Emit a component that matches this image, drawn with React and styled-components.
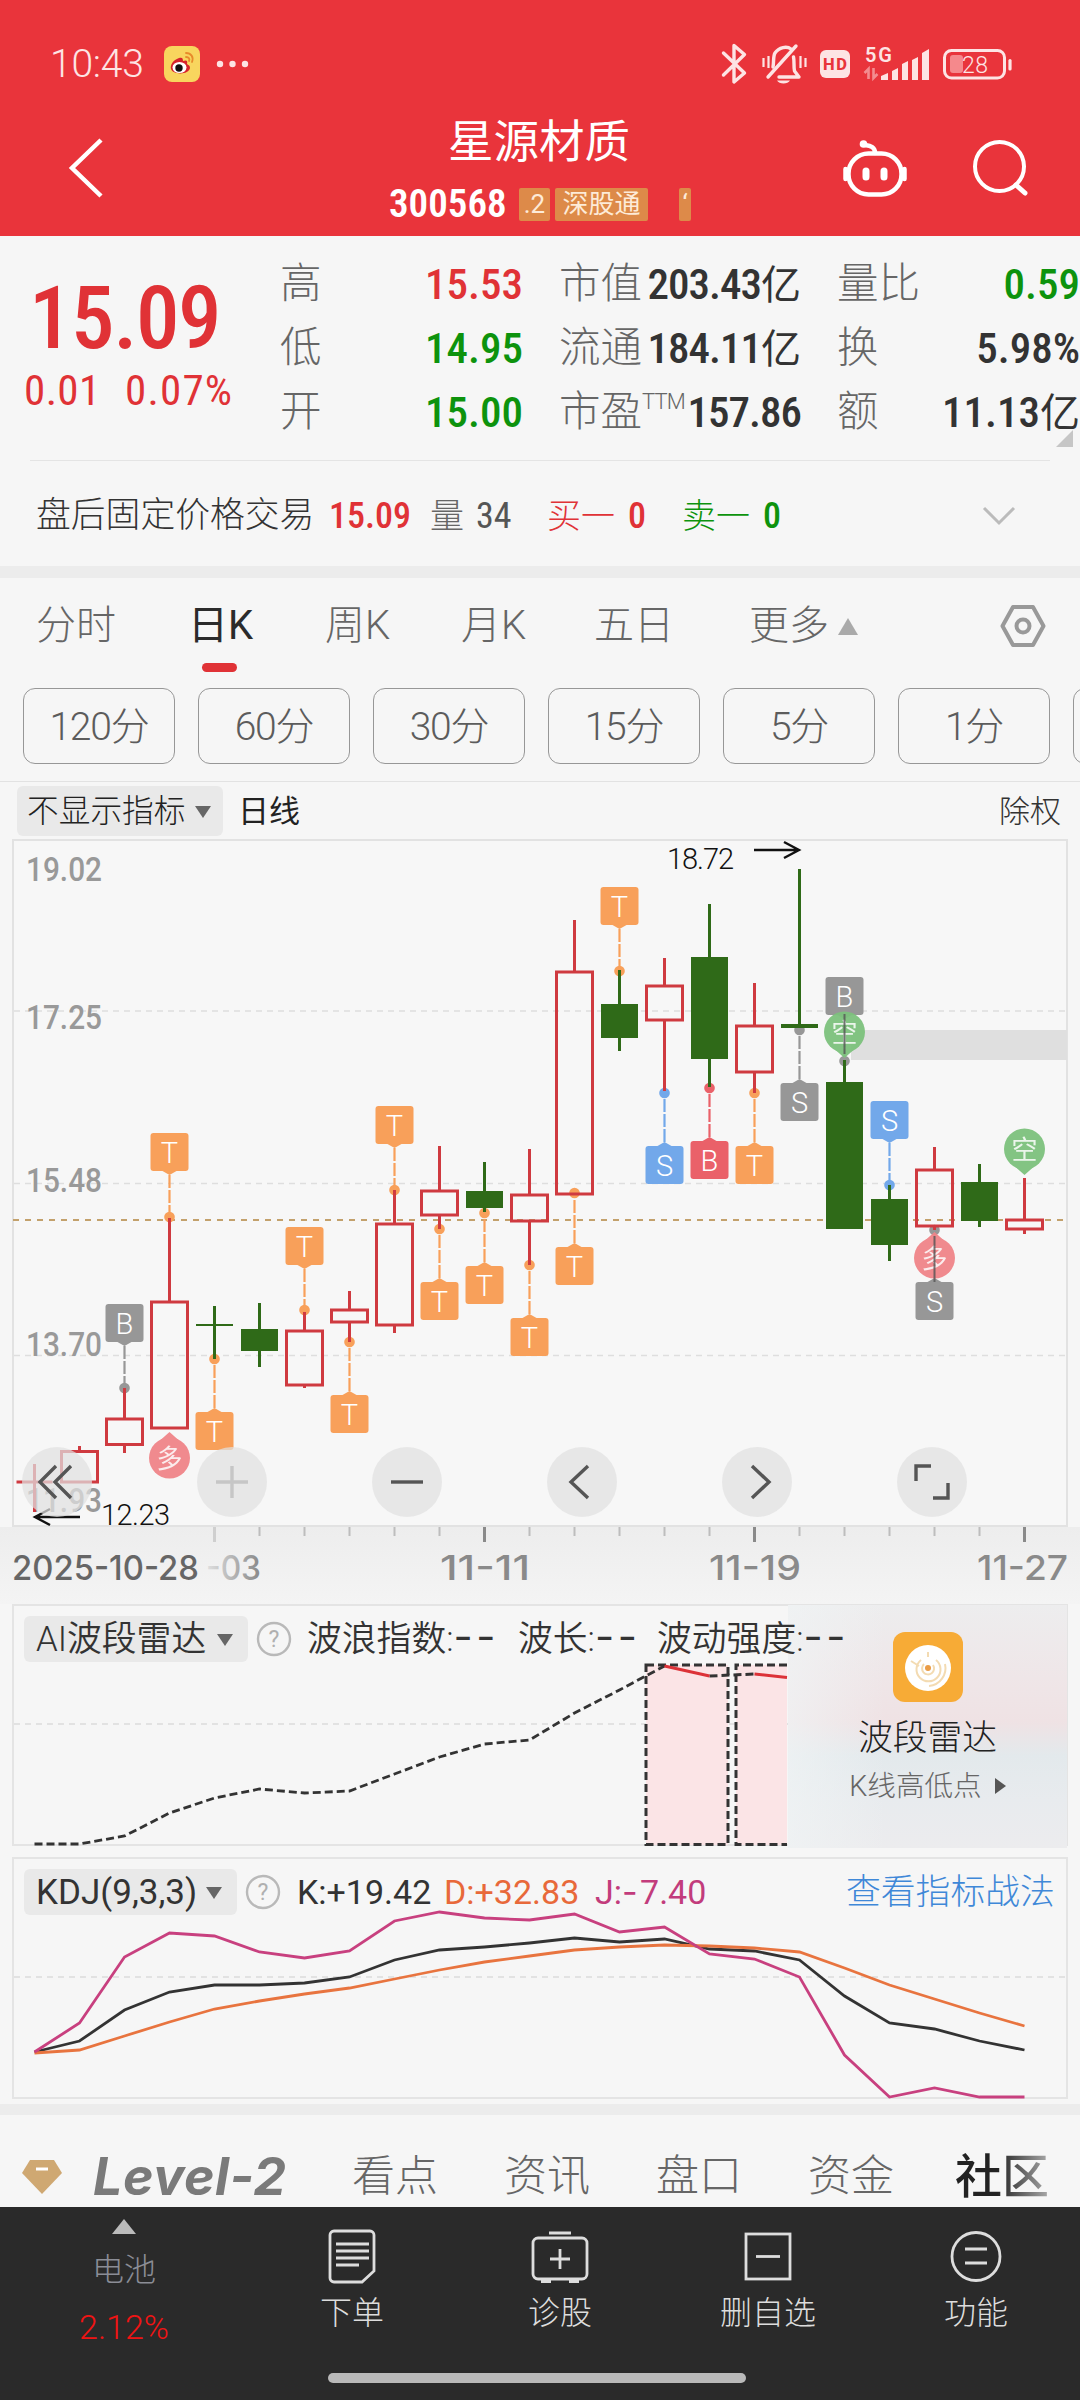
import React from 'react';
import styled, { createGlobalStyle, css } from 'styled-components';

const RED = '#e03236';
const GREEN = '#0d930d';
const BAR_RED = '#cf3a40';
const BAR_GREEN = '#2f6a18';
const ORANGE = '#f8a05a';
const GREY = '#979797';

const GlobalStyle = createGlobalStyle`
  * {
    box-sizing: border-box;
  }

  body {
    margin: 0;
    background: #f6f6f6;
    font-family: 'Roboto', 'Noto Sans CJK SC', sans-serif;
    color: #333;
  }

  svg {
    display: block;
    flex: none;
  }
`;

const Screen = styled.div`
  width: 1080px;
  height: 2400px;
  overflow: hidden;
  display: flex;
  flex-direction: column;
`;

const Text = styled.span`
  flex: none;
  white-space: nowrap;
  line-height: 1;
  font-size: ${({ $size }) => $size || 32}px;
  font-weight: ${({ $weight }) => $weight || 300};
  color: ${({ $color }) => $color || 'inherit'};
  letter-spacing: ${({ $track }) => $track || 0}px;
  margin-left: ${({ $left }) => $left || 0}px;
  ${({ $top }) =>
    $top &&
    css`
      margin-top: ${$top}px;
    `}
  ${({ $width }) =>
    $width &&
    css`
      width: ${$width}px;
    `}
`;

const Digits = styled(Text)`
  font-stretch: 87%;
`;

const Dash = styled.span`
  font-family: 'Inter', sans-serif;
  font-weight: 400;
  font-size: ${({ $wide }) => ($wide ? '1.2em' : '1em')};
  line-height: 0;
  letter-spacing: ${({ $wide }) => ($wide ? 3.6 : 2.4)}px;
`;

const Row = styled.div`
  display: flex;
  align-items: center;
  flex: none;
  margin-top: ${({ $top }) => $top || 0}px;
`;

/* ---------- header ---------- */

const Header = styled.header`
  flex: none;
  height: 236px;
  background: #e9343b;
  color: #fff;
`;

const StatusBar = styled(Row)`
  height: 102px;
  padding: 26px 68px 0 50px;
  color: #fde4e4;
  justify-content: space-between;
`;

const NavBar = styled.div`
  height: 134px;
  display: grid;
  grid-template-columns: 389px 1fr 389px;
`;

const NavSide = styled(Row)`
  padding: ${({ $end }) => ($end ? '0 50px 2px 0' : '0 0 2px 67px')};
  justify-content: ${({ $end }) => ($end ? 'flex-end' : 'flex-start')};
  gap: 64px;
`;

const NavTitle = styled.div`
  display: flex;
  flex-direction: column;
  padding-top: 16px;
`;

const StockName = styled.h1`
  margin: 0;
  height: 50px;
  line-height: 50px;
  font-size: 45.5px;
  font-weight: 400;
  padding-left: 59px;
`;

const CodeRow = styled(Row)`
  height: 32px;
  margin-top: 20px;
`;

const Tag = styled.span`
  height: 33px;
  width: ${({ $width }) => $width}px;
  margin-left: ${({ $left }) => $left}px;
  border-radius: 2px;
  background: #dd8a49;
  color: #fdebd8;
  font-size: 26px;
  font-weight: 400;
  line-height: 33px;
  text-align: center;
  white-space: nowrap;
  overflow: hidden;
`;

/* ---------- quote ---------- */

const Quote = styled.section`
  flex: none;
  height: 224px;
  display: grid;
  grid-template-columns: 280px 243px 36px 242px 36px 243px;
  position: relative;
`;

const PriceBlock = styled.div`
  color: ${RED};
  padding: 38px 0 0 24px;
`;

const Price = styled.div`
  font-size: 87px;
  line-height: 88px;
  font-weight: 500;
  font-stretch: 87%;
  letter-spacing: -1.4px;
  padding-left: 5px;
`;

const Column = styled.div`
  padding-top: 16px;
`;

const Metric = styled(Row)`
  height: 64px;
  justify-content: space-between;
`;

const MetricLabel = styled.span`
  font-size: 41.5px;
  line-height: 1;
  font-weight: 300;
  color: #666;
  display: flex;
  white-space: nowrap;
`;

const Sup = styled.sup`
  font-size: 22px;
  line-height: 22px;
  font-weight: 300;
  letter-spacing: -0.8px;
`;

const MetricValue = styled.span`
  font-size: 43px;
  line-height: 1;
  font-weight: 500;
  font-stretch: 87%;
  letter-spacing: ${({ $tight }) => ($tight ? -1 : 0)}px;
  white-space: nowrap;
  color: ${({ $color }) => $color || '#333'};
`;

const Unit = styled.span`
  font-size: 40px;
  line-height: 0;
  font-weight: 400;
  letter-spacing: 0;
`;

const Corner = styled.i`
  position: absolute;
  right: 7px;
  bottom: 13px;
  border-left: 17px solid transparent;
  border-bottom: 17px solid #c6c6c6;
`;

const AfterHours = styled(Row)`
  height: 106px;
  margin: 0 30px;
  padding: 4px 34px 0 6px;
  border-top: 1px solid #e4e4e4;
`;

const Gap = styled.div`
  flex: none;
  height: ${({ $height }) => $height}px;
  background: #ececec;
`;

/* ---------- period tabs ---------- */

const Tabs = styled(Row)`
  height: 110px;
  padding: 0 0 14px 36px;
  color: #666;
`;

const Tab = styled.span`
  position: relative;
  flex: none;
  font-size: 40px;
  line-height: 1;
  font-weight: ${({ $active }) => ($active ? 400 : 300)};
  color: ${({ $active }) => ($active ? '#2b2b2b' : '#666')};
  width: ${({ $width }) => $width}px;

  ${({ $active }) =>
    $active &&
    css`
      &::after {
        content: '';
        position: absolute;
        left: 14px;
        bottom: -26px;
        width: 35px;
        height: 9px;
        border-radius: 5px;
        background: ${RED};
      }
    `}
`;

const Pills = styled(Row)`
  height: 94px;
  padding-left: 23px;
  gap: 23px;
  align-items: flex-start;
  border-bottom: 1px solid #e2e2e2;
  overflow: hidden;
`;

const Pill = styled.span`
  flex: none;
  width: 152px;
  height: 76px;
  border: 1px solid #979797;
  border-radius: 12px;
  text-align: center;
  font-size: 39px;
  line-height: 76px;
  font-weight: 300;
  letter-spacing: -1.2px;
  color: #5c5c5c;
`;

const Toolbar = styled(Row)`
  height: 57px;
  padding: 1px 20px 0 17px;
`;

const Picker = styled.span`
  flex: none;
  display: flex;
  align-items: center;
  justify-content: space-between;
  width: ${({ $width }) => $width}px;
  height: ${({ $height }) => $height || 46}px;
  padding: 1px ${({ $end }) => $end || 15}px 0 ${({ $pad }) => $pad || 12}px;
  background: #e9e9e9;
  border-radius: 6px;
`;

const Caret = styled.i`
  flex: none;
  border: solid transparent;
  border-width: 0 ${({ $half }) => $half || 8}px;
  ${({ $up, $color, $tall }) =>
    $up
      ? css`
          border-bottom: ${$tall}px solid ${$color};
        `
      : css`
          border-top: 12px solid #666;
        `}
`;

/* ---------- charts ---------- */

const ChartArea = styled.div`
  position: relative;
  flex: none;
  height: 765px;
`;

const ChartButtons = styled.div`
  position: absolute;
  left: 22px;
  top: 608px;
  display: flex;
  gap: 105px;
`;

const RoundButton = styled.button`
  width: 70px;
  height: 70px;
  padding: 0;
  border: 0;
  border-radius: 50%;
  background: rgba(224, 224, 224, 0.72);
  display: grid;
  place-items: center;
`;

const Panel = styled.section`
  position: relative;
  flex: none;
  height: ${({ $height }) => $height}px;
  margin: 0 12px ${({ $bottom }) => $bottom}px;
  border: 2px solid #e4e4e4;
`;

const PanelHead = styled(Row)`
  position: relative;
  z-index: 2;
  padding: 10px 0 0 10px;
`;

const Plot = styled.svg`
  position: absolute;
  left: -14px;
  top: -2px;
`;

const Promo = styled.aside`
  position: absolute;
  top: -1px;
  right: -1px;
  width: 279px;
  height: 243px;
  padding-top: 27px;
  display: flex;
  flex-direction: column;
  align-items: center;
  background:
    linear-gradient(90deg, rgba(240, 244, 245, 0.7), rgba(240, 240, 242, 0) 35%),
    linear-gradient(#ededee 0%, #efe6e8 30%, #efe2e4 48%, #e3e9ec 62%, #e8ebee 80%, #ececee 100%);
`;

/* ---------- bottom ---------- */

const Sections = styled(Row)`
  height: 92px;
  padding: 31px 0 0 22px;
  color: #666;
`;

const Level = styled.span`
  width: 259px;
  margin-left: 31px;
  font-family: 'Inter', sans-serif;
  font-size: 52px;
  line-height: 1;
  font-weight: 700;
  font-style: italic;
  letter-spacing: 0.5px;
  color: #7a7a7a;
`;

const Fading = styled(Text)`
  background: linear-gradient(90deg, #222 45%, #aaa 100%);
  background-clip: text;
  color: transparent;
`;

const BottomBar = styled.footer`
  flex: none;
  height: 193px;
  background: #2a2a2a;
  color: #ddd;
`;

const Actions = styled.nav`
  height: 166px;
  display: grid;
  grid-template-columns: 248px repeat(4, 208px);
`;

const Action = styled.div`
  display: flex;
  flex-direction: column;
  align-items: center;
  padding-top: ${({ $top }) => $top || 21}px;
`;

const ActionLabel = styled.span`
  font-size: 32px;
  line-height: 36px;
  font-weight: 300;
  margin-top: 9px;
`;

const BatteryLabel = styled(ActionLabel)`
  color: #8b8d96;
  margin-top: 18px;
`;

const HomeBar = styled.div`
  width: 418px;
  height: 10px;
  margin-left: 328px;
  border-radius: 5px;
  background: #b9b9b9;
`;

/* ---------- data ---------- */

const x = (i) => 34.5 + 45 * i;

// [kind, body top, body bottom, wick top, wick bottom]
const candles = [
  ['r', 1482, 1482, 1464, 1512],
  ['r', 1451.5, 1482, 1446, 1482],
  ['r', 1419, 1444.5, 1388, 1453],
  ['r', 1302, 1428, 1218, 1428],
  ['g', 1324, 1326, 1306, 1359],
  ['g', 1329, 1351, 1303, 1367],
  ['r', 1331, 1385, 1312, 1388],
  ['r', 1310, 1322, 1291, 1342],
  ['r', 1224, 1325, 1190, 1333],
  ['r', 1191, 1215, 1146, 1229],
  ['g', 1191, 1208, 1162, 1212],
  ['r', 1195, 1221, 1149, 1265],
  ['r', 972, 1194, 920, 1194],
  ['g', 1004, 1038, 970, 1051],
  ['r', 986, 1020, 958, 1091],
  ['g', 957, 1059, 904, 1087],
  ['r', 1026, 1072, 983, 1093],
  ['g', 1024, 1028, 869, 1028],
  ['g', 1082, 1229, 1060, 1229],
  ['g', 1199, 1245, 1185, 1261],
  ['r', 1170, 1226, 1147, 1230],
  ['g', 1182, 1221, 1164, 1227],
  ['r', 1220, 1229, 1178, 1234],
];

// [candle, letter, colour, box top, dot y]
const markers = [
  [2, 'B', GREY, 1304, 1388],
  [3, 'T', ORANGE, 1133, 1217],
  [4, 'T', ORANGE, 1412, 1359],
  [6, 'T', ORANGE, 1227, 1310],
  [7, 'T', ORANGE, 1395, 1342],
  [8, 'T', ORANGE, 1106, 1190],
  [9, 'T', ORANGE, 1282, 1229],
  [10, 'T', ORANGE, 1266, 1213],
  [11, 'T', ORANGE, 1318, 1265],
  [12, 'T', ORANGE, 1247, 1193],
  [13, 'T', ORANGE, 887, 971],
  [14, 'S', '#72a8ea', 1146, 1093],
  [15, 'B', '#ea6169', 1141, 1088],
  [16, 'T', ORANGE, 1146, 1093],
  [17, 'S', GREY, 1083, 1030],
  [18, 'B', GREY, 977, 1061],
  [19, 'S', '#72a8ea', 1101, 1185],
  [20, 'S', GREY, 1282, 1230],
];

const pins = [
  [3, '多', '#f08589', 1458, -1],
  [18, '空', '#7dc27d', 1032, 1],
  [20, '多', '#f08589', 1258, -1],
  [22, '空', '#7dc27d', 1149, 1],
];

const wave = [
  1844, 1844, 1836, 1813, 1798, 1789, 1793, 1791, 1774, 1757, 1744, 1740, 1713,
  1690, 1666,
];

const kdj = {
  k: [
    2052, 2041, 2010, 1992, 1985, 1985, 1983, 1977, 1960, 1950, 1947, 1943,
    1938, 1942, 1939, 1949, 1951, 1960, 1996, 2023, 2029, 2041, 2050,
  ],
  d: [
    2053, 2050, 2036, 2022, 2009, 2001, 1994, 1988, 1979, 1970, 1962, 1956,
    1950, 1947, 1945, 1946, 1948, 1952, 1968, 1985, 1999, 2013, 2026,
  ],
  j: [
    2052, 2023, 1957, 1933, 1936, 1952, 1958, 1951, 1921, 1912, 1918, 1920,
    1914, 1932, 1927, 1954, 1959, 1977, 2055, 2097, 2088, 2097, 2097,
  ],
};

const points = (ys) => ys.map((y, i) => `${x(i)},${y}`).join(' ');

/* ---------- icons ---------- */

const Icon = styled.svg`
  margin-left: ${({ $left }) => $left || 0}px;
`;

const Chevron = styled(Icon)`
  margin-left: auto;
`;

const WeiboIcon = () => (
  <Icon $left={20} width="36" height="36" viewBox="0 0 36 36">
    <rect width="36" height="36" rx="8" fill="#f8d55e" />
    <path d="M15 12c-6 2-9 7-8 11 2 6 18 6 19-1 0-3-2-3-3-4 1-4-1-4-4-3 0-3-1-4-4-3z" fill="#d6232c" />
    <ellipse cx="15.500" cy="21.500" rx="7" ry="5.500" fill="#fff" />
    <circle cx="15" cy="22" r="3.700" fill="#111" />
    <path d="M22 7c5 0 8 4 6 9M22 11c3 0 4 2 3 4" fill="none" stroke="#e88a2a" strokeWidth="1.800" strokeLinecap="round" />
  </Icon>
);

const StatusIcons = () => (
  <svg width="292" height="44" viewBox="720 42 292 44" fill="none" stroke="#fde4e4">
    <path d="M723.500 53l21 20-10.500 9V45.500l10.500 9-21 20.500" strokeWidth="3.400" strokeLinejoin="round" strokeLinecap="round" />
    <path d="M768 77l28-31" strokeWidth="3.400" strokeLinecap="round" />
    <path d="M773 67c1-5 0-11 2-14 4-6 12-7 16-4" strokeWidth="3.400" strokeLinecap="round" />
    <path d="M779 77h20l-4.500-6c-1-5 0-10-1-14" strokeWidth="3.400" strokeLinejoin="round" strokeLinecap="round" />
    <path d="M777 80.500h13c-2 4-11 4-13 0z" fill="#fde4e4" stroke="none" />
    <path d="M763.500 58v9M768.500 56v12M805.500 58v9M800.500 56v12" strokeWidth="2.200" />
    <rect x="820" y="50" width="30" height="28" rx="6" fill="#fde4e4" stroke="none" />
    <text x="823" y="69.500" fontSize="16.500" fontWeight="800" fill="#e9343b" stroke="none" textLength="24">HD</text>
    <text x="865" y="62" fontSize="20" fontWeight="600" fill="#fde4e4" stroke="none" textLength="27">5G</text>
    <path d="M868.500 79V69l-4 4M873.500 68v10l4-4" strokeWidth="2.600" opacity="0.500" />
    <path d="M881 80v-4l7-3v7zM892 80v-9l6-3v12zM902 80V64l6-3v19zM912 80V60l6-3v23zM922 80V53l7-4v31z" fill="#fde4e4" stroke="none" />
    <rect x="944.500" y="50.500" width="60" height="27.500" rx="7" strokeWidth="3" />
    <rect x="950" y="55" width="13" height="18" rx="3" fill="#f5898c" stroke="none" />
    <path d="M1010 60.500v8.500" strokeWidth="3.200" strokeLinecap="round" />
    <text x="962" y="73" fontSize="23" fontWeight="300" fill="#fde4e4" stroke="none" textLength="26">28</text>
  </svg>
);

const RobotIcon = () => (
  <svg width="66" height="60" viewBox="0 0 66 60" fill="none" stroke="#fff" strokeWidth="4.500">
    <rect x="6.500" y="15.500" width="53" height="41" rx="20" />
    <path d="M33 15c0-6-4-7-10-8" strokeLinecap="round" />
    <circle cx="21.500" cy="6" r="3.800" fill="#fff" stroke="none" />
    <path d="M3.500 31v10M62.500 31v10" strokeLinecap="round" />
    <path d="M24 33v6M42 33v6" strokeWidth="7" strokeLinecap="round" />
  </svg>
);

const SearchIcon = () => (
  <svg width="58" height="58" viewBox="0 0 58 58" fill="none" stroke="#fff" strokeWidth="4">
    <circle cx="27.500" cy="27.500" r="24.500" />
    <path d="M44 46l9 8" strokeWidth="5" strokeLinecap="round" />
  </svg>
);

const HelpIcon = () => (
  <Icon $left={8} width="36" height="36" viewBox="0 0 36 36">
    <circle cx="18" cy="18" r="16" fill="none" stroke="#b9b9b9" strokeWidth="2.400" />
    <text x="18" y="26" fontSize="23" textAnchor="middle" fill="#b0b0b0">?</text>
  </Icon>
);

const RadarIcon = () => (
  <svg width="70" height="70" viewBox="0 0 70 70">
    <rect width="70" height="70" rx="12" fill="#f7ab36" />
    <circle cx="35" cy="36" r="23" fill="#fff" />
    <g fill="none" stroke="#f3dbb2" strokeWidth="2">
      <path d="M35 20v5M28 28a12 12 0 1 0 15 0M31 32a6 6 0 1 0 9 1M18 29l8 5M52 32a18 18 0 0 1-16 22" />
    </g>
    <circle cx="35" cy="36" r="3" fill="#ea9c46" />
  </svg>
);

const Marker = ({ i, letter, color, top, dot }) => {
  const below = dot < top;
  const from = below ? top - 4 : top + 42;
  const cx = x(i);
  return (
    <g>
      <circle cx={cx} cy={dot} r="5.300" fill={color} />
      <line x1={cx} x2={cx} y1={from} y2={dot} stroke={color} strokeWidth="2.200" strokeDasharray="13 2" />
      <rect x={cx - 19} y={top} width="38" height="38" rx="3" fill={color} />
      <path
        d={below ? `M${cx - 7} ${top}l7-4 7 4z` : `M${cx - 7} ${top + 38}l7 4 7-4z`}
        fill={color}
      />
      <text x={cx} y={top + 30} fontSize="29" fontWeight="300" textAnchor="middle" fill="#fff">
        {letter}
      </text>
    </g>
  );
};

const Pin = ({ i, label, color, cy, dir }) => (
  <g opacity="0.950">
    <circle cx={x(i)} cy={cy} r="20.500" fill={color} />
    <path d={`M${x(i) - 9} ${cy + 18 * dir}L${x(i)} ${cy + 26 * dir}L${x(i) + 9} ${cy + 18 * dir}z`} fill={color} />
    <text x={x(i)} y={cy + 9.5} fontSize="26" textAnchor="middle" fill="#fff" fontWeight="400" opacity="0.850">
      {label}
    </text>
  </g>
);

const Candle = ({ i, data }) => {
  const [kind, top, bottom, high, low] = data;
  const cx = x(i);
  if (kind === 'g') {
    return (
      <g fill={BAR_GREEN}>
        <rect x={cx - 18.5} y={top} width="37" height={bottom - top} />
        <rect x={cx - 1.5} y={high} width="3" height={low - high} />
      </g>
    );
  }
  return (
    <g fill="none" stroke={BAR_RED} strokeWidth="3">
      <path d={`M${cx} ${high}V${top}M${cx} ${bottom}V${low}`} />
      <path d={`M${cx - 18} ${top}h36V${bottom}h-36z`} />
    </g>
  );
};

const KLine = () => (
  <svg width="1080" height="765" viewBox="0 839 1080 765">
    <defs>
      <linearGradient id="axis" x1="0" x2="0" y1="0" y2="1">
        <stop offset="0" stopColor="#ededed" />
        <stop offset="1" stopColor="#f4f4f4" />
      </linearGradient>
      <linearGradient id="faded">
        <stop offset="0" stopColor="#e0e0e0" />
        <stop offset="1" stopColor="#888" />
      </linearGradient>
    </defs>
    <rect y="1527" width="1080" height="77" fill="url(#axis)" />
    <rect x="13" y="840" width="1054" height="686" fill="#f7f7f7" stroke="#e2e2e2" strokeWidth="2" />
    <path d="M14 1011H1066M14 1183.500H1066M14 1355.500H1066" stroke="#dedede" strokeWidth="1.500" strokeDasharray="6 5" />
    <rect x="851" y="1030" width="216" height="30" fill="#dfdfdf" />
    <g fontSize="34" fontWeight="500" fill="#999">
      <text x="26" y="881" textLength="76" lengthAdjust="spacingAndGlyphs">19.02</text>
      <text x="26" y="1029" textLength="76" lengthAdjust="spacingAndGlyphs">17.25</text>
      <text x="26" y="1192" textLength="76" lengthAdjust="spacingAndGlyphs">15.48</text>
      <text x="26" y="1356" textLength="76" lengthAdjust="spacingAndGlyphs">13.70</text>
      <text x="26" y="1512" textLength="76" lengthAdjust="spacingAndGlyphs">11.93</text>
    </g>
    <path d="M13 1220H1066" stroke="#c3a16c" strokeWidth="2" strokeDasharray="6 6" />
    {markers.map(([i, letter, color, top, dot]) => (
      <Marker key={i} i={i} letter={letter} color={color} top={top} dot={dot} />
    ))}
    {pins.map(([i, label, color, cy, dir]) => (
      <Pin key={i} i={i} label={label} color={color} cy={cy} dir={dir} />
    ))}
    {candles.map((data, i) => (
      <Candle key={i} i={i} data={data} />
    ))}
    <path d="M844.500 1014v40M934.500 1236v46" stroke="#555" strokeWidth="2" opacity="0.800" />
    <g fill="#111" fontSize="29" fontWeight="300">
      <text x="667" y="869" textLength="67">18.72</text>
      <text x="101" y="1525" textLength="69">12.23</text>
    </g>
    <path d="M754 850h45M784 842l15 8-15 8M80 1517H36M50 1509l-15 8 15 8" fill="none" stroke="#111" strokeWidth="2.400" />
    {candles.map((_, i) => {
      if (i < 4) return null;
      const major = (i - 4) % 6 === 0;
      return (
        <line
          key={i}
          x1={x(i)}
          x2={x(i)}
          y1="1527"
          y2={major ? 1542 : 1536}
          stroke={i === 4 ? '#cfcfcf' : major ? '#8a8a8a' : '#bdbdbd'}
          strokeWidth={major ? 3 : 2}
        />
      );
    })}
    <g fontSize="34" fontFamily="Inter" fontWeight="500" fill="#8a8a8a">
      <text x="12" y="1580" fill="#666" textLength="187" lengthAdjust="spacingAndGlyphs">2025-10-28</text>
      <text x="206" y="1580" fill="url(#faded)" textLength="55" lengthAdjust="spacingAndGlyphs">-03</text>
      <text x="440" y="1580" textLength="90" lengthAdjust="spacingAndGlyphs">11-11</text>
      <text x="709" y="1580" textLength="92" lengthAdjust="spacingAndGlyphs">11-19</text>
      <text x="977" y="1580" textLength="91" lengthAdjust="spacingAndGlyphs">11-27</text>
    </g>
  </svg>
);

const buttonIcons = [
  'M34 19L18 35l16 16M49 19L33 35l16 16',
  'M19 35h32M35 19v32',
  'M19 35h32',
  'M41 19L24 35l17 16',
  'M30 19l17 16-17 16',
  'M19 34V19h15M51 36v15H36',
];

const periods = ['120分', '60分', '30分', '15分', '5分', '1分', ''];

const App = () => (
  <Screen>
    <GlobalStyle />
    <Header>
      <StatusBar>
        <Row>
          <Text $size={39} $track={-0.2}>10:43</Text>
          <WeiboIcon />
          <Icon $left={16} width="34" height="8" fill="#fde4e4">
            <circle cx="4" cy="4" r="3.200" />
            <circle cx="16.500" cy="4" r="3.200" />
            <circle cx="29" cy="4" r="3.200" />
          </Icon>
        </Row>
        <StatusIcons />
      </StatusBar>
      <NavBar>
        <NavSide>
          <svg width="37" height="62" viewBox="0 0 37 62" fill="none" stroke="#fff" strokeWidth="4.500">
            <path d="M34 3L5 31l29 28" />
          </svg>
        </NavSide>
        <NavTitle>
          <StockName>星源材质</StockName>
          <CodeRow>
            <Digits $size={39} $weight={600} $width={130}>300568</Digits>
            <Tag $width={31} $left={0}>.2</Tag>
            <Tag $width={93} $left={5}>深股通</Tag>
            <Tag $width={12} $left={31}>‘</Tag>
          </CodeRow>
        </NavTitle>
        <NavSide $end>
          <RobotIcon />
          <SearchIcon />
        </NavSide>
      </NavBar>
    </Header>

    <Quote>
      <PriceBlock>
        <Price>15.09</Price>
        <Row $top={7}>
          <Digits $size={43} $weight={400} $track={0.4} $width={101}>0.01</Digits>
          <Digits $size={43} $weight={400} $track={1.2}>0.07%</Digits>
        </Row>
      </PriceBlock>
      <Column>
        <Metric>
          <MetricLabel>高</MetricLabel>
          <MetricValue $color={RED}>15.53</MetricValue>
        </Metric>
        <Metric>
          <MetricLabel>低</MetricLabel>
          <MetricValue $color={GREEN}>14.95</MetricValue>
        </Metric>
        <Metric>
          <MetricLabel>开</MetricLabel>
          <MetricValue $color={GREEN}>15.00</MetricValue>
        </Metric>
      </Column>
      <span />
      <Column>
        <Metric>
          <MetricLabel>市值</MetricLabel>
          <MetricValue $tight>
            203.43<Unit>亿</Unit>
          </MetricValue>
        </Metric>
        <Metric>
          <MetricLabel>流通</MetricLabel>
          <MetricValue $tight>
            184.11<Unit>亿</Unit>
          </MetricValue>
        </Metric>
        <Metric>
          <MetricLabel>
            市盈<Sup>TTM</Sup>
          </MetricLabel>
          <MetricValue $tight>157.86</MetricValue>
        </Metric>
      </Column>
      <span />
      <Column>
        <Metric>
          <MetricLabel>量比</MetricLabel>
          <MetricValue $color={GREEN}>0.59</MetricValue>
        </Metric>
        <Metric>
          <MetricLabel>换</MetricLabel>
          <MetricValue>5.98%</MetricValue>
        </Metric>
        <Metric>
          <MetricLabel>额</MetricLabel>
          <MetricValue>
            11.13<Unit>亿</Unit>
          </MetricValue>
        </Metric>
      </Column>
      <Corner />
    </Quote>

    <AfterHours>
      <Text $size={34.8} $width={293}>盘后固定价格交易</Text>
      <Digits $size={36} $weight={500} $color={RED} $width={101}>15.09</Digits>
      <Text $size={34} $color="#666" $width={46}>量</Text>
      <Digits $size={36} $weight={400} $color="#555" $width={71}>34</Digits>
      <Text $size={34} $color={RED} $width={81}>买一</Text>
      <Digits $size={36} $weight={500} $color={RED} $width={54}>0</Digits>
      <Text $size={34} $color={GREEN} $width={81}>卖一</Text>
      <Digits $size={36} $weight={500} $color={GREEN}>0</Digits>
      <Chevron width="34" height="20" fill="none" stroke="#bbb" strokeWidth="3">
        <path d="M2 2l15 15L32 2" />
      </Chevron>
    </AfterHours>
    <Gap $height={12} />

    <Tabs>
      <Tab $width={152}>分时</Tab>
      <Tab $width={137} $active>日K</Tab>
      <Tab $width={136}>周K</Tab>
      <Tab $width={133}>月K</Tab>
      <Tab $width={155}>五日</Tab>
      <Tab $width={89}>更多</Tab>
      <Caret $up $half={10} $tall={17} $color="#aaa" />
      <Icon $left={142} width="46" height="44" viewBox="0 0 46 44" fill="none" stroke="#999" strokeWidth="4">
        <path d="M13 3h20l10.500 19L33 41H13L2.500 22z" strokeLinejoin="round" />
        <circle cx="23" cy="22" r="6.500" />
      </Icon>
    </Tabs>
    <Pills>
      {periods.map((label) => (
        <Pill key={label}>{label}</Pill>
      ))}
    </Pills>
    <Toolbar>
      <Picker $width={206} $height={50} $pad={10} $end={12}>
        <Text $size={31.7} $color="#222">不显示指标</Text>
        <Caret />
      </Picker>
      <Text $size={31} $weight={400} $left={15} $color="#222">日线</Text>
      <Text $size={31} $left={699} $color="#333">除权</Text>
    </Toolbar>

    <ChartArea>
      <KLine />
      <ChartButtons>
        {buttonIcons.map((d, i) => (
          <RoundButton key={d}>
            <svg width="70" height="70" fill="none" stroke={i === 1 ? '#c6c6c6' : '#555'} strokeWidth="3.400">
              <path d={d} />
            </svg>
          </RoundButton>
        ))}
      </ChartButtons>
    </ChartArea>

    <Panel $height={242} $bottom={11}>
      <PanelHead>
        <Picker $width={224}>
          <Text $size={34.8} $weight={350} $color="#333">AI波段雷达</Text>
          <Caret />
        </Picker>
        <HelpIcon />
        <Text $size={34.8} $weight={350} $left={15} $width={211}>
          波浪指数:<Dash $wide>--</Dash>
        </Text>
        <Text $size={34.8} $weight={350} $width={139}>
          波长:<Dash $wide>--</Dash>
        </Text>
        <Text $size={34.8} $weight={350}>
          波动强度:<Dash $wide>--</Dash>
        </Text>
      </PanelHead>
      <Plot width="1080" height="244" viewBox="0 1604 1080 244" fill="none">
        <path d="M14 1724H788" stroke="#dcdcdc" strokeWidth="1.500" strokeDasharray="6 5" />
        <rect x="646" y="1665" width="82" height="180" fill="#fbe4e6" />
        <rect x="736" y="1665" width="51" height="180" fill="#fbe4e6" />
        <g stroke="#333" strokeWidth="3" strokeDasharray="8 4">
          <rect x="646" y="1665" width="82" height="179.500" />
          <path d="M787 1665H736V1844.500H787" />
          <polyline points={points(wave)} strokeWidth="2.800" />
          <path d={`M${x(15)} 1676L${x(16)} 1674`} />
        </g>
        <path d={`M${x(14)} 1666L${x(15)} 1676M${x(16)} 1674L787 1677.5`} stroke="#dc3238" strokeWidth="3" />
      </Plot>
      <Promo>
        <RadarIcon />
        <Text $size={34.8} $top={19} $color="#222">波段雷达</Text>
        <Row $top={16}>
          <Text $size={28.6} $color="#666">K线高低点</Text>
          <Icon $left={13} width="11" height="18">
            <path d="M0 1l11 8-11 8z" fill="#555" />
          </Icon>
        </Row>
      </Promo>
    </Panel>

    <Panel $height={242} $bottom={5}>
      <PanelHead>
        <Picker $width={213}>
          <Text $size={35} $weight={400} $color="#333">KDJ(9,3,3)</Text>
          <Caret />
        </Picker>
        <HelpIcon />
        <Text $size={34} $weight={400} $left={16} $width={147}>K:+19.42</Text>
        <Text $size={34} $weight={400} $width={151} $color="#e8693a">D:+32.83</Text>
        <Text $size={34} $weight={400} $width={251} $color="#c23c7c">
          J:<Dash>-</Dash>7.40
        </Text>
        <Text $size={34.8} $color="#3f88d8">查看指标战法</Text>
      </PanelHead>
      <Plot width="1080" height="244" viewBox="0 1857 1080 244" fill="none" strokeWidth="2.800">
        <path d="M14 1977H1066" stroke="#dcdcdc" strokeWidth="1.500" strokeDasharray="6 5" />
        <polyline points={points(kdj.k)} stroke="#333" />
        <polyline points={points(kdj.d)} stroke="#e8743f" />
        <polyline points={points(kdj.j)} stroke="#c8407f" />
      </Plot>
    </Panel>
    <Gap $height={11} />

    <Sections>
      <svg width="40" height="36" viewBox="0 0 40 36">
        <path d="M8 1h24l8 13-20 21L0 14z" fill="#cfa872" />
        <path d="M14 10h12" stroke="#fff" strokeWidth="3" />
      </svg>
      <Level>Level-2</Level>
      <Text $size={43} $width={152}>看点</Text>
      <Text $size={43} $width={152}>资讯</Text>
      <Text $size={43} $width={152}>盘口</Text>
      <Text $size={43} $width={147}>资金</Text>
      <Fading $size={47} $weight={500}>社区</Fading>
    </Sections>

    <BottomBar>
      <Actions>
        <Action $top={12}>
          <Caret $up $half={12.5} $tall={15} $color="#bbb" />
          <BatteryLabel>电池</BatteryLabel>
          <Text $size={34} $color="#f01414" $top={22}>2.12%</Text>
        </Action>
        <Action>
          <svg width="50" height="58" viewBox="0 0 50 58" fill="none" stroke="#ddd" strokeWidth="2.800">
            <path d="M7 3h36a4 4 0 0 1 4 4v36l-12 11H7a4 4 0 0 1-4-4V7a4 4 0 0 1 4-4z" />
            <path d="M9 16h33M9 23h33M9 30h33M9 37h23" />
          </svg>
          <ActionLabel>下单</ActionLabel>
        </Action>
        <Action>
          <svg width="60" height="58" viewBox="0 0 60 58" fill="none" stroke="#ddd" strokeWidth="2.800">
            <rect x="3" y="10" width="54" height="41" rx="5" />
            <path d="M19 5h22M30 21v20M20 31h20" />
            <path d="M11 53h10M39 53h10" strokeWidth="4" />
          </svg>
          <ActionLabel>诊股</ActionLabel>
        </Action>
        <Action>
          <svg width="50" height="58" viewBox="0 0 50 58" fill="none" stroke="#ddd" strokeWidth="2.800">
            <rect x="3" y="6" width="44" height="45" />
            <path d="M13 28.500h24" />
          </svg>
          <ActionLabel>删自选</ActionLabel>
        </Action>
        <Action>
          <svg width="54" height="58" viewBox="0 0 54 58" fill="none" stroke="#ddd" strokeWidth="2.800">
            <circle cx="27" cy="28.500" r="24" />
            <path d="M16 21h22M16 35h22" />
          </svg>
          <ActionLabel>功能</ActionLabel>
        </Action>
      </Actions>
      <HomeBar />
    </BottomBar>
  </Screen>
);

export default App;
